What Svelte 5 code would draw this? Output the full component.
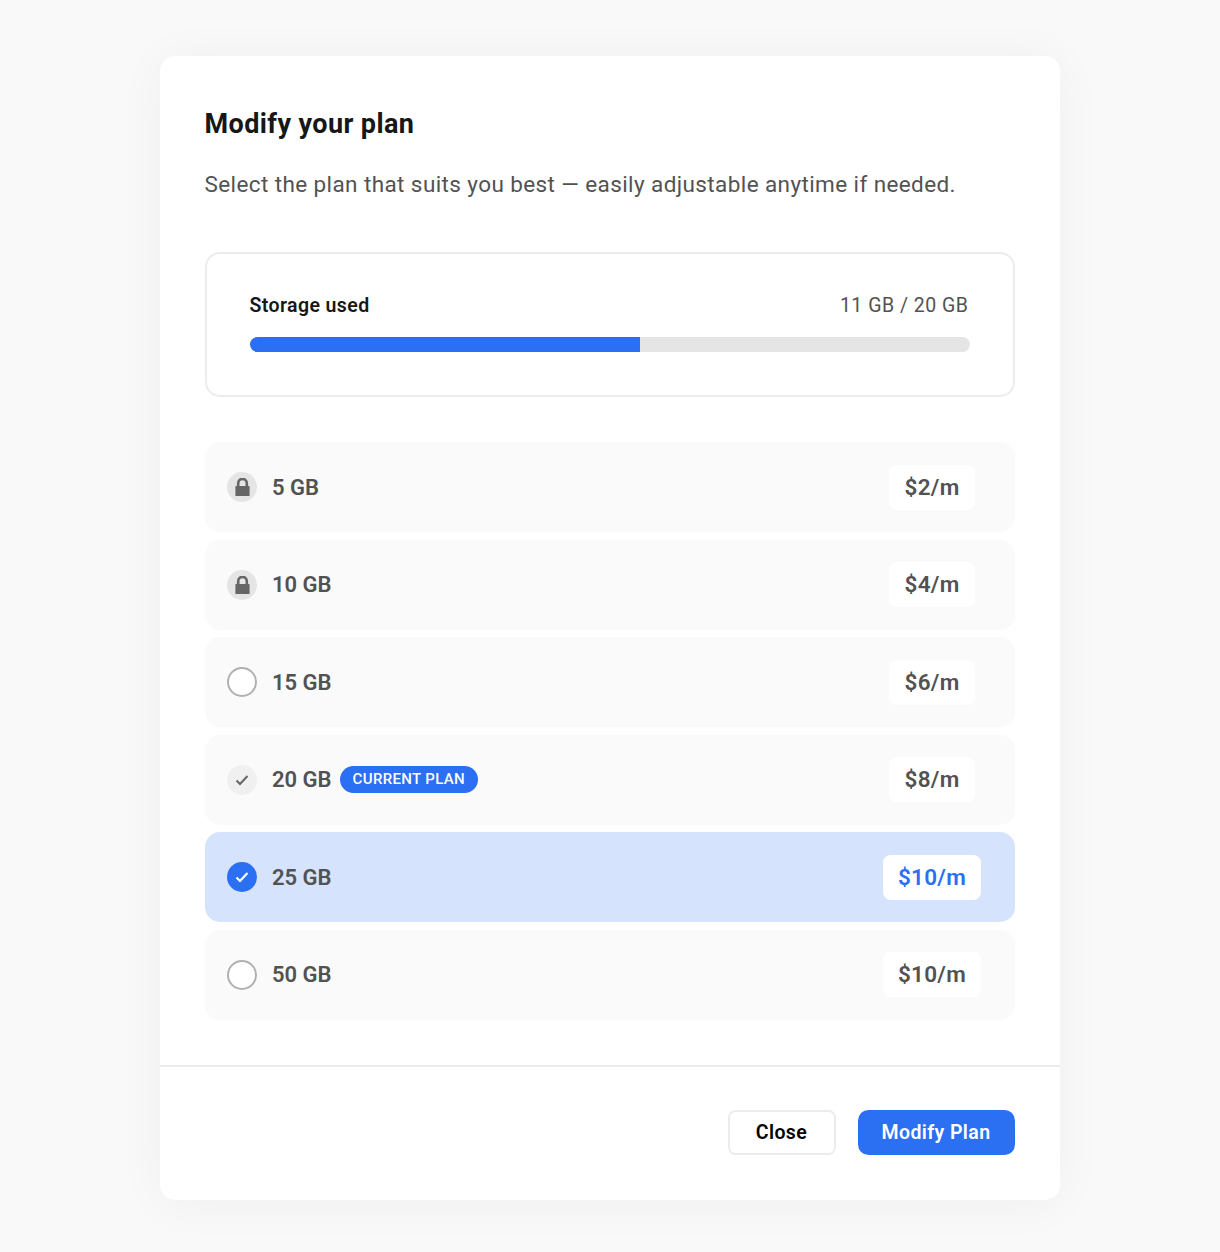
<script lang="ts">
	const plans = [
		{ size: '5 GB', price: '$2/m', state: 'locked' },
		{ size: '10 GB', price: '$4/m', state: 'locked' },
		{ size: '15 GB', price: '$6/m', state: 'open' },
		{ size: '20 GB', price: '$8/m', state: 'current' },
		{ size: '25 GB', price: '$10/m', state: 'selected' },
		{ size: '50 GB', price: '$10/m', state: 'open' }
	];
</script>

<div class="page">
	<div class="modal">
		<div class="body">
			<h2>Modify your plan</h2>
			<p class="sub">Select the plan that suits you best — easily adjustable anytime if needed.</p>

			<div class="storage">
				<div class="storage-head">
					<span class="storage-label">Storage used</span>
					<span class="storage-value">11 GB / 20 GB</span>
				</div>
				<div class="track">
					<div class="fill" style="width: 54.2%"></div>
				</div>
			</div>

			<div class="plans">
				{#each plans as plan}
					<div class="plan" class:selected={plan.state === 'selected'}>
						{#if plan.state === 'locked'}
							<span class="icon locked">
								<svg width="15" height="18" viewBox="0 0 15 18">
									<path d="M3.200 9V5.200a4.300 4.300 0 0 1 8.600 0V9" fill="none" stroke="#666" stroke-width="2.600" />
									<path d="M1 8h13a.6.6 0 0 1 .6.600v8.800a.6.6 0 0 1-.6.600H1a.6.6 0 0 1-.6-.6V8.600A.6.6 0 0 1 1 8z" fill="#666" />
								</svg>
							</span>
						{:else if plan.state === 'open'}
							<span class="icon open"></span>
						{:else if plan.state === 'current'}
							<span class="icon current">
								<svg width="14" height="12" viewBox="0 0 14 12">
									<polyline points="1.500,6.500 5,10 12.500,2" fill="none" stroke="#666" stroke-width="2" />
								</svg>
							</span>
						{:else}
							<span class="icon checked">
								<svg width="14" height="12" viewBox="0 0 14 12">
									<polyline points="1.500,6.500 5,10 12.500,2" fill="none" stroke="#fff" stroke-width="2.200" />
								</svg>
							</span>
						{/if}
						<span class="size">{plan.size}</span>
						{#if plan.state === 'current'}
							<span class="badge">Current plan</span>
						{/if}
						<div class="price-cell">
							<span class="price">{plan.price}</span>
						</div>
					</div>
				{/each}
			</div>
		</div>

		<div class="footer">
			<button class="btn close">Close</button>
			<button class="btn primary">Modify Plan</button>
		</div>
	</div>
</div>

<style>
	:global(body) {
		background: #f9f9f9;
		font-family: Roboto, 'Liberation Sans', sans-serif;
	}

	.page {
		height: 1252px;
		box-sizing: border-box;
		padding: 56px 0 0 159.500px;
		overflow: hidden;
	}

	.modal {
		width: 900px;
		background: #fff;
		border-radius: 15px;
		box-shadow: 0 3px 50px rgba(0, 0, 0, 0.045);
	}

	.body {
		padding: 45px 45px 45px;
		border-bottom: 2px solid #ececec;
	}

	h2 {
		margin: 0;
		font-size: 27px;
		line-height: 45px;
		font-weight: 700;
		letter-spacing: 0.4px;
		color: #171717;
		padding-top: 1px;
	}

	.sub {
		margin: 19px 0 50px;
		font-size: 22.500px;
		line-height: 36px;
		letter-spacing: 0.4px;
		color: #525252;
	}

	.storage {
		border: 2px solid #ececec;
		border-radius: 15px;
		padding: 37px 43px 43px;
		height: 145px;
		box-sizing: border-box;
	}

	.storage-head {
		display: flex;
		justify-content: space-between;
		align-items: center;
		line-height: 30px;
		margin-bottom: 16px;
		padding-right: 1px;
	}

	.storage-label {
		font-size: 19.500px;
		font-weight: 600;
		letter-spacing: 0.4px;
		color: #171717;
	}

	.storage-value {
		font-size: 19.500px;
		letter-spacing: 0.5px;
		color: #525252;
	}

	.track {
		height: 15px;
		border-radius: 8px;
		background: #e5e5e5;
		overflow: hidden;
	}

	.fill {
		height: 100%;
		background: #2b6ff2;
	}

	.plans {
		display: flex;
		flex-direction: column;
		gap: 7.500px;
		margin-top: 45px;
	}

	.plan {
		display: flex;
		align-items: center;
		height: 90px;
		padding: 0 22.500px;
		box-sizing: border-box;
		border-radius: 15px;
		background: #fafafa;
	}

	.plan.selected {
		background: #d5e3fc;
	}

	.icon {
		width: 30px;
		height: 30px;
		border-radius: 50%;
		box-sizing: border-box;
		display: flex;
		align-items: center;
		justify-content: center;
		margin-right: 15px;
		flex: none;
	}

	.locked {
		background: #e5e5e5;
	}

	.open {
		border: 2px solid #b0b0b0;
		background: #fff;
	}

	.current {
		background: #f0f0f0;
	}

	.checked {
		background: #2b6ff2;
	}

	.size {
		font-size: 22px;
		font-weight: 600;
		color: #525252;
	}

	.badge {
		margin-left: 8.500px;
		height: 27px;
		padding: 0 12.500px;
		border-radius: 14px;
		background: #2b6ff2;
		color: #fff;
		font-size: 15px;
		font-weight: 500;
		line-height: 26px;
		letter-spacing: 0.35px;
		text-transform: uppercase;
	}

	.price-cell {
		margin-left: auto;
		width: 120px;
		display: flex;
		justify-content: center;
	}

	.price {
		height: 45px;
		padding: 0 15px;
		border-radius: 7.500px;
		background: #fff;
		font-size: 22.500px;
		font-weight: 600;
		line-height: 45px;
		letter-spacing: 0.3px;
		color: #525252;
	}

	.selected .price {
		color: #2b6ff2;
	}

	.footer {
		display: flex;
		justify-content: flex-end;
		gap: 22px;
		padding: 43.500px 45px 45px;
	}

	.btn {
		height: 45px;
		border-radius: 10.500px;
		font-family: inherit;
		font-size: 19.500px;
		font-weight: 600;
		letter-spacing: 0.4px;
		box-sizing: border-box;
	}

	.close {
		width: 108px;
		background: #fff;
		border: 2px solid #ececec;
		color: #000;
		border-radius: 7.500px;
	}

	.primary {
		width: 157px;
		background: #2b6ff2;
		border: none;
		color: #fff;
	}
</style>
